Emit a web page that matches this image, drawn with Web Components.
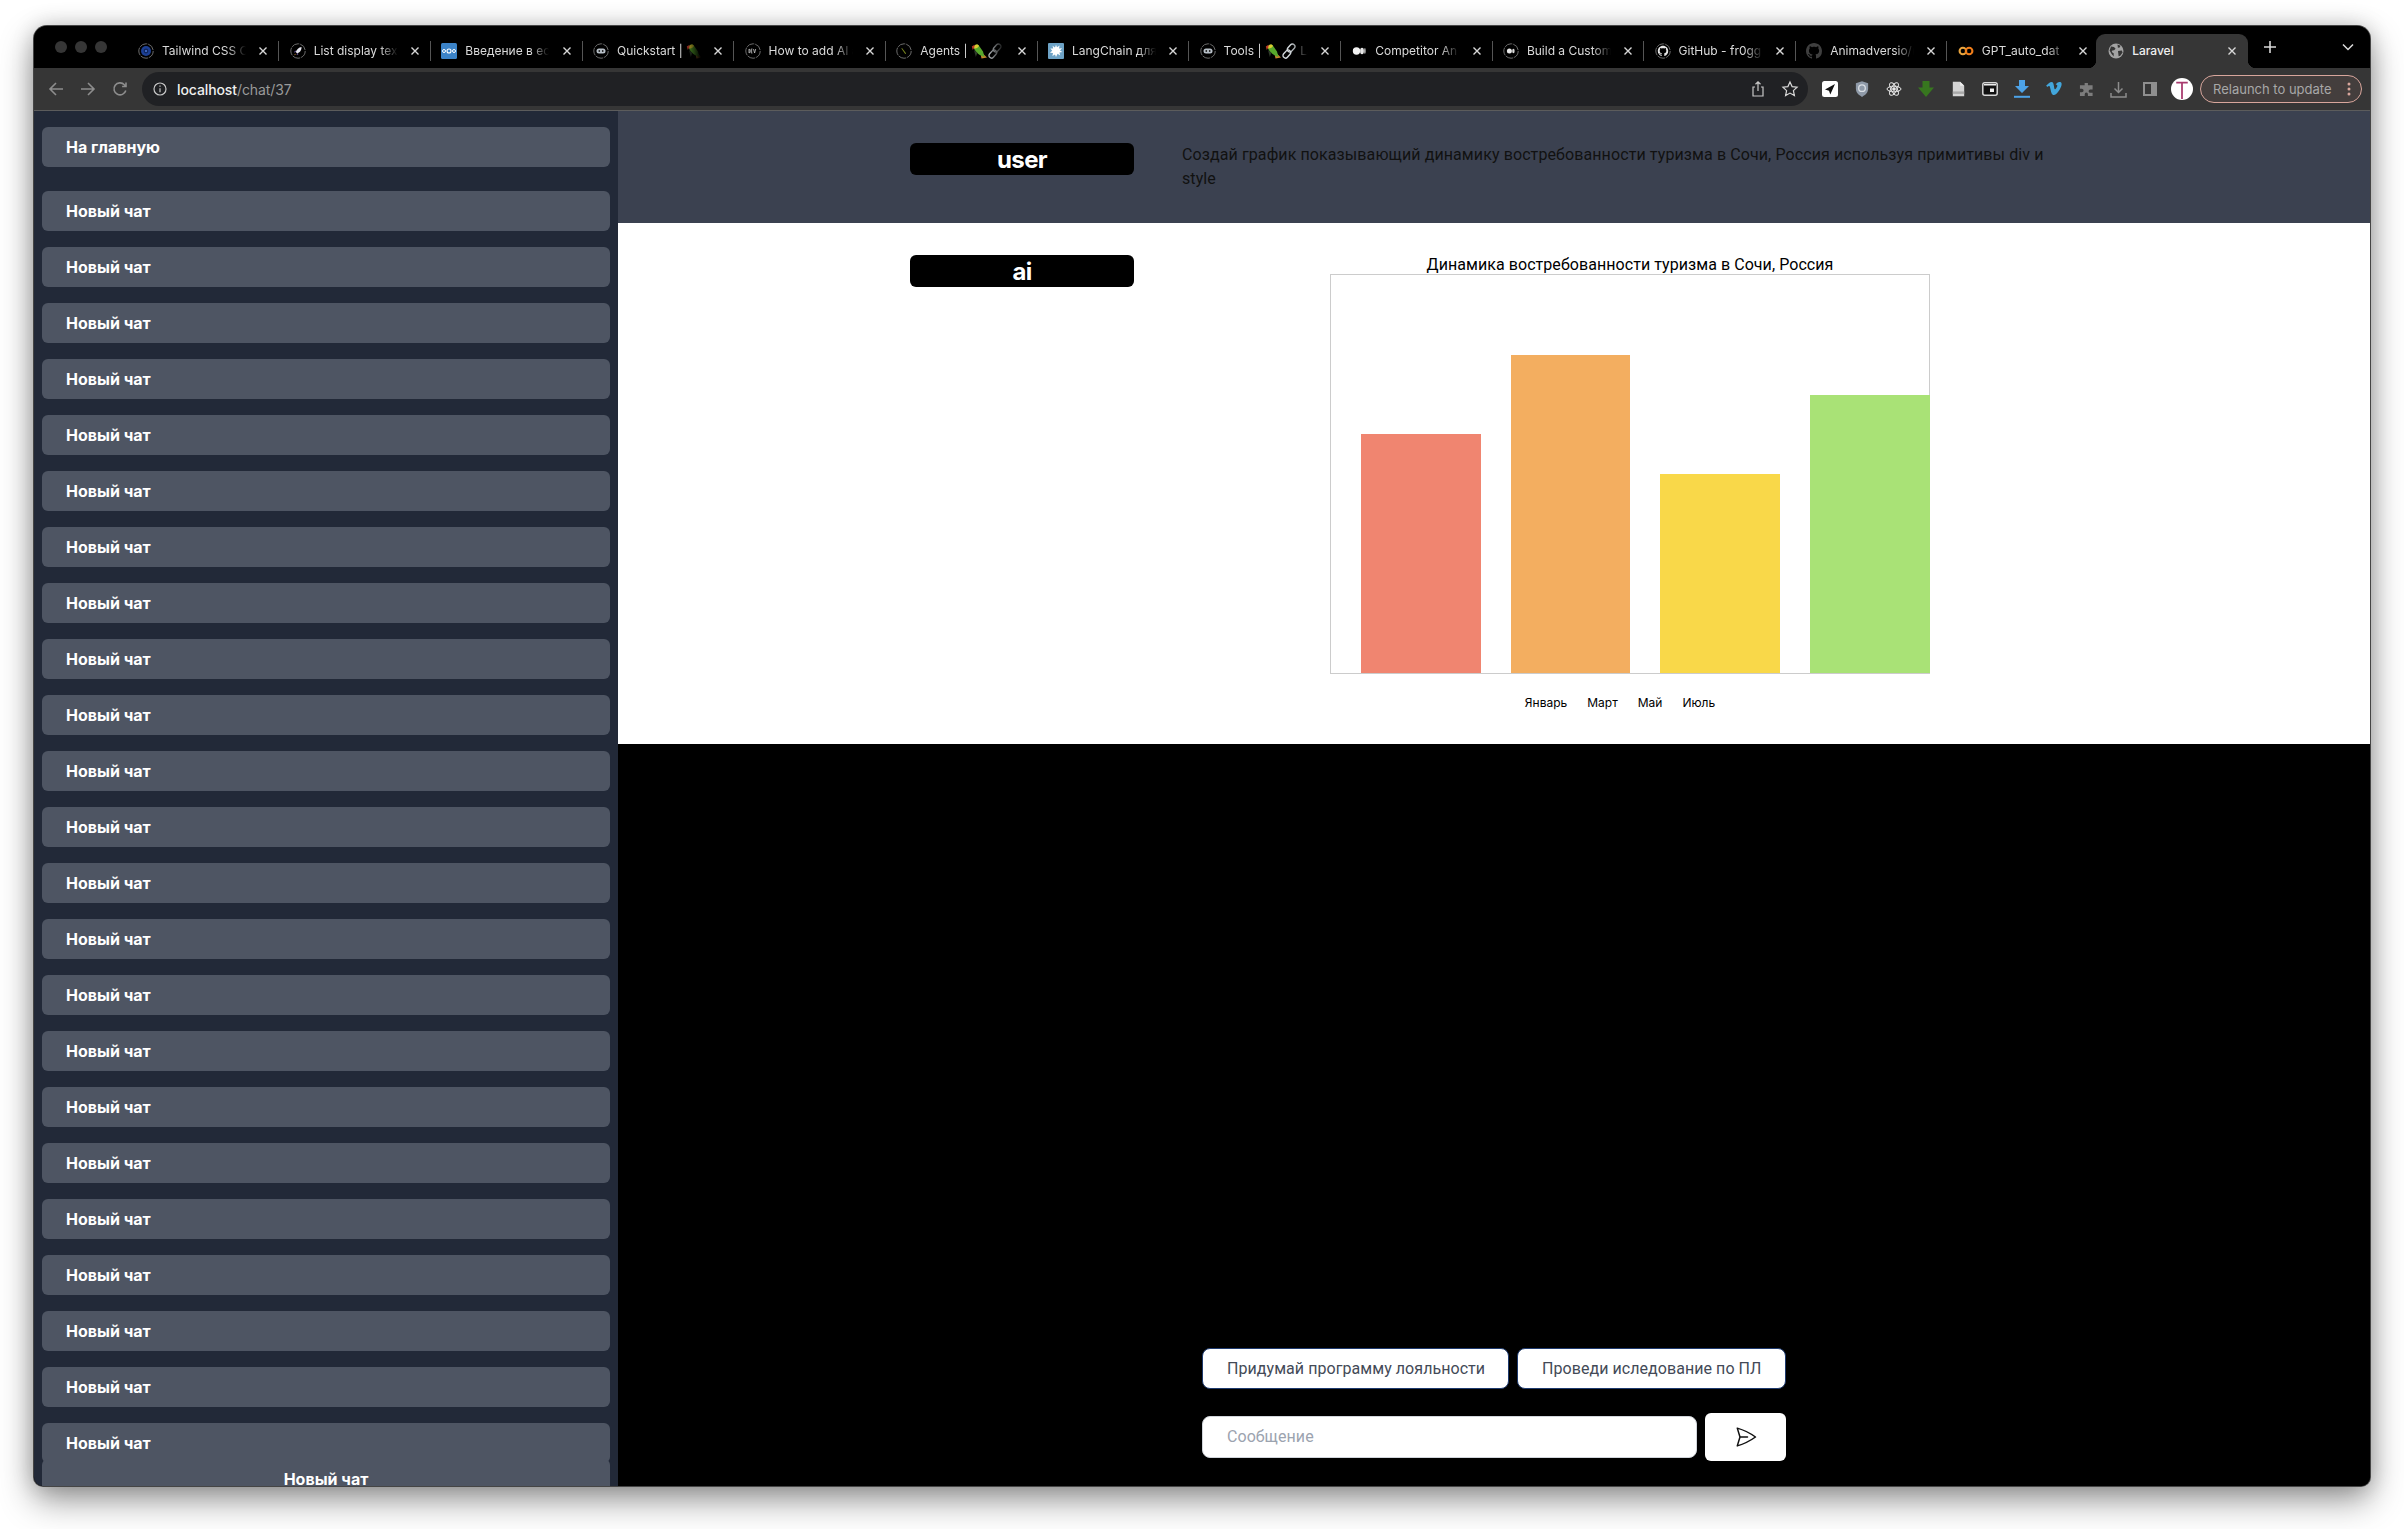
<!DOCTYPE html>
<html lang="ru">
<head>
<meta charset="utf-8">
<title>Laravel</title>
<style>
    html, body{ margin: 0; height: 100%; background: #fff; overflow: hidden; }
    body{ font-family: Inter, "Liberation Sans", sans-serif; padding: 26px 0 0 34px; box-sizing: border-box; height: 1529px; }
</style>
</head>
<body>

<app-window>
    <tab-strip slot="tabs">
        <browser-tab icon="tw">Tailwind CSS C</browser-tab>
        <browser-tab icon="rocket">List display tex</browser-tab>
        <browser-tab icon="nn">Введение в ес</browser-tab>
        <browser-tab icon="bot">Quickstart | <emoji-parrot></emoji-parrot></browser-tab>
        <browser-tab icon="dev">How to add AI a</browser-tab>
        <browser-tab icon="pen">Agents | <emoji-parrot></emoji-parrot><emoji-link></emoji-link></browser-tab>
        <browser-tab icon="splat">LangChain для</browser-tab>
        <browser-tab icon="bot">Tools | <emoji-parrot></emoji-parrot><emoji-link></emoji-link> La</browser-tab>
        <browser-tab icon="medium">Competitor An</browser-tab>
        <browser-tab icon="mring">Build a Custom</browser-tab>
        <browser-tab icon="gh">GitHub - fr0gg</browser-tab>
        <browser-tab icon="ghdark">Animadversio/(</browser-tab>
        <browser-tab icon="colab" nosep>GPT_auto_dat</browser-tab>
        <browser-tab icon="globe" active>Laravel</browser-tab>
    </tab-strip>
    <tool-bar slot="toolbar"></tool-bar>

    <chat-sidebar slot="sidebar">
        <side-button slot="home">На главную</side-button>
        <side-button>Новый чат</side-button><side-button>Новый чат</side-button><side-button>Новый чат</side-button>
        <side-button>Новый чат</side-button><side-button>Новый чат</side-button><side-button>Новый чат</side-button>
        <side-button>Новый чат</side-button><side-button>Новый чат</side-button><side-button>Новый чат</side-button>
        <side-button>Новый чат</side-button><side-button>Новый чат</side-button><side-button>Новый чат</side-button>
        <side-button>Новый чат</side-button><side-button>Новый чат</side-button><side-button>Новый чат</side-button>
        <side-button>Новый чат</side-button><side-button>Новый чат</side-button><side-button>Новый чат</side-button>
        <side-button>Новый чат</side-button><side-button>Новый чат</side-button><side-button>Новый чат</side-button>
        <side-button>Новый чат</side-button><side-button>Новый чат</side-button>
        <side-button slot="pinned" center>Новый чат</side-button>
    </chat-sidebar>

    <chat-message role-name="user" kind="user">
        Создай график показывающий динамику востребованности туризма в Сочи, Россия используя примитивы div и style
    </chat-message>
    <chat-message role-name="ai" kind="ai">
        <bar-chart></bar-chart>
    </chat-message>
    <chat-form></chat-form>
</app-window>

<script>
const OCTOCAT = "M8 0C3.58 0 0 3.58 0 8c0 3.54 2.29 6.53 5.47 7.59.4.07.55-.17.55-.38 0-.19-.01-.82-.01-1.49-2.01.37-2.53-.49-2.69-.94-.09-.23-.48-.94-.82-1.13-.28-.15-.68-.52-.01-.53.63-.01 1.08.58 1.23.82.72 1.21 1.87.87 2.33.66.07-.52.28-.87.51-1.07-1.78-.2-3.64-.89-3.64-3.95 0-.87.31-1.59.82-2.15-.08-.2-.36-1.02.08-2.12 0 0 .67-.21 2.2.82.64-.18 1.32-.27 2-.27.68 0 1.36.09 2 .27 1.53-1.04 2.2-.82 2.2-.82.44 1.1.16 1.92.08 2.12.51.56.82 1.27.82 2.15 0 3.07-1.87 3.75-3.65 3.95.29.25.54.73.54 1.48 0 1.07-.01 1.93-.01 2.2 0 .21.15.46.55.38A8.013 8.013 0 0016 8c0-4.42-3.58-8-8-8z";
const RING = `<circle cx="8" cy="8" r="7.2" fill="none" stroke="#6b6b6b" stroke-width="1" stroke-dasharray="8 1"/>`;

const FAVICONS = {
    tw: `${RING}<circle cx="8" cy="8" r="5" fill="#1c3f94"/><circle cx="8" cy="8" r="2.4" fill="#10275f"/><circle cx="8" cy="8" r="1" fill="#4d7be0"/>`,
    rocket: `${RING}<path d="M11.5 4C8.8 4.4 6.6 6.6 5.8 9l1.4 1.4c2.4-.8 4.6-3 4.3-6.4z" fill="#e8e8f0"/><path d="M5.8 9L4.2 9.6l1-2zM7.2 10.4l-.6 1.6 2-1z" fill="#9a7be0"/><path d="M5.4 10.8l-1 1 .3.4 1-.9z" fill="#f0a040"/>`,
    nn: `<rect width="16" height="16" rx="1.5" fill="#3b83c8"/><circle cx="3" cy="8" r="1.5" fill="none" stroke="#fff" stroke-width="1"/><circle cx="8" cy="8" r="2" fill="none" stroke="#fff" stroke-width="1.1"/><circle cx="13" cy="8" r="1.5" fill="none" stroke="#fff" stroke-width="1"/>`,
    bot: `${RING}<rect x="3.5" y="5.5" width="9" height="5" rx="2.5" fill="#b8c0c8"/><circle cx="6.3" cy="8" r=".9" fill="#222"/><circle cx="9.7" cy="8" r=".9" fill="#222"/>`,
    dev: `${RING}<path d="M4 6v4c1.500 0 1.500-4 0-4M7.400 6H6.200v4h1.200M6.200 8h1M8.500 6l1.100 4 1.100-4" fill="none" stroke="#c8c8c8" stroke-width=".8"/>`,
    pen: `${RING}<path d="M6 5l4.2 5.5-1 .6L5.4 5.6z" fill="#7c8a20"/>`,
    splat: `<rect width="16" height="16" rx="1" fill="#6ea3c6"/><path d="M8 1.8l1 2.4 2.6-1.6-.6 2.8 3-.2-2 2.2 2.4 1.6-3 .4.8 3-2.6-1.6L8 14l-1-2.6-2.6 1.6.6-3-3-.2 2.2-2L2.4 5.4l2.8.2-.6-2.8 2.4 1.6z" fill="#fff"/>`,
    medium: `<circle cx="5.5" cy="8" r="3.7" fill="#f2f2f2"/><ellipse cx="11" cy="8" rx="1.9" ry="3.3" fill="#e6e6e6"/><ellipse cx="13.9" cy="8" rx=".7" ry="3" fill="#d8d8d8"/>`,
    mring: `${RING}<circle cx="6.4" cy="8" r="2.5" fill="#e8e8e8"/><ellipse cx="10.4" cy="8" rx="1.2" ry="2.2" fill="#d8d8d8"/>`,
    gh: `${RING}<g transform="translate(2.8 2.8) scale(.65)"><path d="${OCTOCAT}" fill="#e6e6e6"/></g>`,
    ghdark: `<path d="${OCTOCAT}" fill="#3f3f3f"/>`,
    colab: `<circle cx="4.9" cy="8" r="3.3" fill="none" stroke="#e8a33d" stroke-width="2.1"/><circle cx="11.1" cy="8" r="3.3" fill="none" stroke="#ef7d1a" stroke-width="2.1"/>`,
    globe: `<circle cx="8" cy="8" r="7.5" fill="#a3a3a3"/><path d="M3 3.5l3 .5 1.6 1.8-1.5 1.5-1.8.1-.6 1.6 2 1.2v3.2L3.6 11 1.6 7.5zM9.5 1.6l3 1.2-.8 1.6-1.8.3zM10 8l3.8-.6.8 2-2.4 3.4-1.6.4z" fill="#363636"/>`
};

class AppWindow extends HTMLElement {
    constructor(){
        super();
        this.attachShadow({ mode: 'open' }).innerHTML = `
            <style>
                :host{
                    display: flex;
                    flex-direction: column;
                    width: 2336px;
                    height: 1460px;
                    border-radius: 13px 13px 9px 9px;
                    overflow: hidden;
                    background: #000;
                    box-shadow: 0 0 0 1px #454545, 0 14px 34px rgba(0,0,0,.42), 0 0 22px rgba(0,0,0,.18);
                }
                .main{ flex: 1; display: flex; min-height: 0; }
                .conversation{ flex: 1; display: flex; flex-direction: column; background: #000; min-width: 0; }
            </style>
            <slot name="tabs"></slot>
            <slot name="toolbar"></slot>
            <div class="main">
                <slot name="sidebar"></slot>
                <div class="conversation"><slot></slot></div>
            </div>
        `;
    }
}

class TabStrip extends HTMLElement {
    constructor(){
        super();
        this.attachShadow({ mode: 'open' }).innerHTML = `
            <style>
                :host{
                    display: flex;
                    align-items: flex-end;
                    height: 42px;
                    background: #000;
                    position: relative;
                    padding-left: 93.6px;
                    flex: none;
                }
                .lights{ position: absolute; left: 21px; top: 15px; display: flex; gap: 8px; }
                .lights i{ width: 12px; height: 12px; border-radius: 50%; background: #363636; display: block; }
                .plus{ width: 14px; height: 14px; margin: 0 0 14px 15px; flex: none; }
                .chev{ width: 12px; height: 8px; margin: 0 0 17px 65px; flex: none; }
            </style>
            <div class="lights"><i></i><i></i><i></i></div>
            <slot></slot>
            <svg class="plus" viewBox="0 0 14 14"><path d="M7 1v12M1 7h12" stroke="#d8d8d8" stroke-width="1.6"/></svg>
            <svg class="chev" viewBox="0 0 12 8"><path d="M1 1.5l5 5 5-5" fill="none" stroke="#dcdcdc" stroke-width="1.5"/></svg>
        `;
    }
}

class BrowserTab extends HTMLElement {
    connectedCallback(){
        const root = this.attachShadow({ mode: 'open' });
        root.innerHTML = `
            <style>
                :host{
                    display: flex;
                    align-items: center;
                    box-sizing: border-box;
                    width: 151.67px;
                    height: 34px;
                    flex: none;
                    position: relative;
                    padding: 0 0 0 10.4px;
                    color: #dadada;
                    font: 12px Inter, "Liberation Sans", sans-serif;
                }
                :host([active]){
                    background: #363636;
                    color: #efefef;
                    border-radius: 9px 9px 0 0;
                    width: 152px;
                    margin-left: -3px;
                    padding-left: 12px;
                }
                :host(:not([active]):not([nosep]))::after{
                    content: "";
                    position: absolute;
                    right: 0;
                    top: 7px;
                    height: 20px;
                    width: 1px;
                    background: #555;
                }
                :host([active])::before{
                    content: "";
                    position: absolute;
                    left: -8px;
                    bottom: 0;
                    width: 8px;
                    height: 8px;
                    background: radial-gradient(circle at 0 0, transparent 8px, #363636 8.5px);
                }
                .flare{
                    display: none;
                    position: absolute;
                    right: -8px;
                    bottom: 0;
                    width: 8px;
                    height: 8px;
                    background: radial-gradient(circle at 100% 0, transparent 8px, #363636 8.5px);
                }
                :host([active]) .flare{ display: block; }
                .fav{ width: 16px; height: 16px; flex: none; }
                .title{
                    width: 86px;
                    margin-left: 8px;
                    white-space: nowrap;
                    overflow: hidden;
                    flex: none;
                    line-height: 18px;
                    -webkit-mask-image: linear-gradient(90deg, #000 66px, transparent 84px);
                    mask-image: linear-gradient(90deg, #000 66px, transparent 84px);
                }
                :host([active]) .title{ -webkit-mask-image: none; mask-image: none; font-weight: 500; }
                .close{ width: 10px; height: 10px; position: absolute; right: 11px; top: 12px; }
            </style>
            <svg class="fav" viewBox="0 0 16 16">${FAVICONS[this.getAttribute('icon')] || ''}</svg>
            <span class="title"><slot></slot></span>
            <svg class="close" viewBox="0 0 10 10"><path d="M1.5 1.5l7 7M8.5 1.5l-7 7" stroke="#d8d8d8" stroke-width="1.4"/></svg>
            <i class="flare"></i>
        `;
    }
}

class EmojiParrot extends HTMLElement {
    constructor(){
        super();
        this.attachShadow({ mode: 'open' }).innerHTML = `
            <style>:host{ display: inline-block; width: 16px; height: 16px; vertical-align: -4px; } svg{ display: block; }</style>
            <svg width="16" height="16" viewBox="0 0 16 16">
                <path d="M9 8L16 14.500 10.500 15.500z" fill="#c9872e"/>
                <path d="M2.500 4.500C3.500 1 7 .5 8.500 3.500L12 8.500l1.500 5.500C9.500 13 5 10 2.500 4.500z" fill="#58a82c"/>
                <path d="M2.500 5C2.800 1.500 6.500.4 8 3 7 5 4.500 6 2.500 5z" fill="#dccb30"/>
                <path d="M3.500 1.800L.8 3.600 1.800 7l1.500-2.400z" fill="#bb3a28"/>
                <path d="M3 7l1.800 7 1.600-4.200z" fill="#2f3a2a"/>
            </svg>`;
    }
}

class EmojiLink extends HTMLElement {
    constructor(){
        super();
        this.attachShadow({ mode: 'open' }).innerHTML = `
            <style>:host{ display: inline-block; width: 16px; height: 16px; vertical-align: -4px; } svg{ display: block; }</style>
            <svg width="16" height="16" viewBox="0 0 16 16" fill="none" stroke="#d4dade" stroke-width="1.4">
                <rect x="7.6" y="0.4" width="5" height="9" rx="2.5" transform="rotate(42 10 5)"/>
                <rect x="3.4" y="6.6" width="5" height="9" rx="2.5" transform="rotate(42 6 11)"/>
            </svg>`;
    }
}

class ToolBar extends HTMLElement {
    constructor(){
        super();
        this.attachShadow({ mode: 'open' }).innerHTML = `
            <style>
                :host{
                    display: flex;
                    align-items: center;
                    box-sizing: border-box;
                    height: 43px;
                    flex: none;
                    padding: 0 0 0 12px;
                    background: #363636;
                    border-bottom: 1px solid #5c5c5c;
                    font: 14px Inter, "Liberation Sans", sans-serif;
                }
                svg{ display: block; flex: none; }
                .nav{ display: flex; gap: 12px; width: 96px; flex: none; }
                .omni{
                    display: flex;
                    align-items: center;
                    box-sizing: border-box;
                    width: 1666px;
                    height: 34px;
                    flex: none;
                    padding: 0 9px 0 11px;
                    border-radius: 17px;
                    background: #202124;
                    color: #9a9a9a;
                }
                .url{ margin-left: 10px; flex: 1; letter-spacing: -.1px; }
                .url b{ color: #efefef; font-weight: 500; }
                .omni-icons{ display: flex; gap: 14px; }
                .ext{ display: flex; margin-left: 6px; flex: none; }
                .ext span{ display: flex; align-items: center; justify-content: center; width: 32px; height: 34px; }
                .pill{
                    display: flex;
                    align-items: center;
                    justify-content: space-between;
                    box-sizing: border-box;
                    width: 162px;
                    height: 28px;
                    margin-left: 2px;
                    padding: 0 10px 0 12px;
                    flex: none;
                    border-radius: 14px;
                    border: 1px solid #d8a69c;
                    background: #443e3d;
                    color: #a8a8a8;
                    font-size: 13px;
                    white-space: nowrap;
                }
            </style>
            <div class="nav">
                <svg width="20" height="20" viewBox="0 0 20 20" fill="none" stroke="#8d8d8d" stroke-width="1.6"><path d="M17 10H4M10 4l-6 6 6 6"/></svg>
                <svg width="20" height="20" viewBox="0 0 20 20" fill="none" stroke="#8d8d8d" stroke-width="1.6"><path d="M3 10h13M10 4l6 6-6 6"/></svg>
                <svg width="20" height="20" viewBox="0 0 20 20" fill="none" stroke="#8d8d8d" stroke-width="1.6"><path d="M15.8 11.5A6 6 0 1 1 14.4 5.8L16 7.4M16 3.6v3.9h-3.9"/></svg>
            </div>
            <div class="omni">
                <svg width="14" height="14" viewBox="0 0 14 14" fill="none" stroke="#c8c8c8" stroke-width="1.2"><circle cx="7" cy="7" r="6"/><path d="M7 6.2v4M7 3.6v1.2"/></svg>
                <span class="url"><b>localhost</b>/chat/37</span>
                <div class="omni-icons">
                    <svg width="18" height="18" viewBox="0 0 18 18" fill="none" stroke="#c8c8c8" stroke-width="1.2"><path d="M6 7H4v9h10V7h-2M9 11V2M6.5 4.2L9 1.8l2.500 2.400"/></svg>
                    <svg width="18" height="18" viewBox="0 0 18 18" fill="none" stroke="#d8d8d8" stroke-width="1.2"><path d="M9 2l2.100 4.600 5 .6-3.700 3.400 1 5L9 13.100l-4.400 2.500 1-5L1.900 7.200l5-.6z"/></svg>
                </div>
            </div>
            <div class="ext">
                <span><svg width="16" height="16" viewBox="0 0 16 16"><rect width="16" height="16" rx="2.500" fill="#fff"/><path d="M13 3L3 8.500l4 1.200 1.300 3.800z" fill="#111"/></svg></span>
                <span><svg width="14" height="16" viewBox="0 0 16 18"><path d="M8 0l7 2.500v6c0 4.500-3 7.500-7 9.500-4-2-7-5-7-9.500v-6z" fill="#8f9aa8"/><circle cx="8" cy="8" r="3.800" fill="none" stroke="#d9dee4" stroke-width="1.500"/></svg></span>
                <span><svg width="16" height="16" viewBox="0 0 16 16" fill="none" stroke="#e6e6e6" stroke-width="1"><ellipse cx="8" cy="8" rx="7" ry="2.800"/><ellipse cx="8" cy="8" rx="7" ry="2.800" transform="rotate(60 8 8)"/><ellipse cx="8" cy="8" rx="7" ry="2.800" transform="rotate(120 8 8)"/><circle cx="8" cy="8" r="1.300" fill="#e6e6e6"/></svg></span>
                <span><svg width="16" height="16" viewBox="0 0 16 16"><path d="M4.500 0h7v6.500H16L8 16 0 6.500h4.500z" fill="#37761f"/></svg></span>
                <span><svg width="13" height="16" viewBox="0 0 16 18"><path d="M1 0h9l5 5v13H1z" fill="#d4d4d4"/><path d="M10 0l5 5h-5z" fill="#f0f0f0"/><rect x="1" y="12" width="14" height="3" fill="#a8a8a8"/></svg></span>
                <span><svg width="16" height="14" viewBox="0 0 16 14"><rect x=".8" y=".8" width="14.400" height="12.400" rx="2" fill="#111" stroke="#d8d8d8" stroke-width="1.500"/><rect x="2" y="2" width="12" height="1.500" fill="#eee"/><rect x="8" y="6.500" width="4" height="3.500" fill="#eee"/></svg></span>
                <span><svg width="16" height="18" viewBox="0 0 16 18"><path d="M5 0h6v6h4l-7 7-7-7h4z" fill="#4da3e8"/><rect y="15.800" width="16" height="2" fill="#4da3e8"/></svg></span>
                <span><svg width="16" height="16" viewBox="0 0 16 16"><path d="M.2 4.600C2.400 2.600 4 1 5.500 1c1.400 0 2 1.200 2.300 3.300.3 2 .6 4 1.100 4 .8 0 2.400-2.600 2.400-3.600 0-1.100-1-1-1.700-.6C10.400 1.800 12.300.8 14 1c1.500.2 1.900 1.500 1.500 3.200-.6 3-4.600 9.800-7.700 9.800-2 0-2.600-2.600-3.200-5.300C4.200 7 3.900 5 3.200 5c-.4 0-1 .4-2 1z" fill="#42a6dc"/></svg></span>
                <span><svg width="15" height="15" viewBox="0 0 16 16"><path d="M6 1h3.500v2.500h5V8H12a1.700 1.700 0 0 0 0 3.500h2.500V15h-5v-2a1.700 1.700 0 0 0-3.400 0v2H1v-4h2a1.900 1.900 0 0 0 0-3.800H1V3.500h5z" fill="#7d7d7d"/></svg></span>
                <span><svg width="17" height="17" viewBox="0 0 17 17" fill="none" stroke="#8d8d8d" stroke-width="1.500"><path d="M8.500 1v10M4.500 7.500l4 4 4-4M1 12v4h15v-4"/></svg></span>
                <span><svg width="14" height="14" viewBox="0 0 14 14"><rect x="1" y="1" width="12" height="12" fill="none" stroke="#8f8f8f" stroke-width="2"/><rect x="8" y="1" width="5" height="12" fill="#8f8f8f"/></svg></span>
                <span><svg width="22" height="22" viewBox="0 0 21 21"><circle cx="10.500" cy="10.500" r="10.500" fill="#fff"/><path d="M5 4.500h11M10.500 4.500V20" stroke="#a83a6e" stroke-width="1.700"/></svg></span>
            </div>
            <div class="pill">
                <span>Relaunch to update</span>
                <svg width="4" height="14" viewBox="0 0 4 14" fill="#d8a69c"><circle cx="2" cy="2" r="1.500"/><circle cx="2" cy="7" r="1.500"/><circle cx="2" cy="12" r="1.500"/></svg>
            </div>
        `;
    }
}

class ChatSidebar extends HTMLElement {
    constructor(){
        super();
        this.attachShadow({ mode: 'open' }).innerHTML = `
            <style>
                :host{
                    display: block;
                    box-sizing: border-box;
                    width: 584px;
                    flex: none;
                    background: #222938;
                    position: relative;
                    overflow: hidden;
                    padding: 16px 8px 0;
                }
                .home{ margin-bottom: 24px; }
                .list{ display: flex; flex-direction: column; gap: 16px; }
                /* boton fijo que queda encima de la lista */
                .pinned{ position: absolute; left: 8px; right: 8px; top: 1348px; }
            </style>
            <div class="home"><slot name="home"></slot></div>
            <div class="list"><slot></slot></div>
            <div class="pinned"><slot name="pinned"></slot></div>
        `;
    }
}

class SideButton extends HTMLElement {
    constructor(){
        super();
        this.attachShadow({ mode: 'open' }).innerHTML = `
            <style>
                :host{
                    display: flex;
                    align-items: center;
                    box-sizing: border-box;
                    height: 40px;
                    padding: 0 24px;
                    border-radius: 6px;
                    background: #4e5563;
                    color: #fff;
                    font: 700 16px/24px Inter, "Liberation Sans", sans-serif;
                }
                :host([center]){ justify-content: center; }
            </style>
            <slot></slot>
        `;
    }
}

class ChatMessage extends HTMLElement {
    constructor(){
        super();
        this.attachShadow({ mode: 'open' }).innerHTML = `
            <style>
                :host{
                    display: flex;
                    justify-content: center;
                    box-sizing: border-box;
                    padding: 32px 0;
                    flex: none;
                    background: #fff;
                    font: 16px/24px Roboto, "Liberation Sans", sans-serif;
                    letter-spacing: .1px;
                    color: #111;
                }
                :host([kind="user"]){ background: #3b4150; height: 112px; }
                :host([kind="ai"]){ height: 521px; }
                .who{
                    width: 224px;
                    height: 32px;
                    flex: none;
                    border-radius: 6px;
                    background: #000;
                    color: #fff;
                    font: 700 24px/34px Inter, "Liberation Sans", sans-serif;
                    letter-spacing: -.6px;
                    text-align: center;
                }
                .body{ width: 896px; margin-left: 48px; flex: none; }
            </style>
            <div class="who"></div>
            <div class="body"><slot></slot></div>
        `;
    }
    connectedCallback(){
        this.shadowRoot.querySelector('.who').textContent = this.getAttribute('role-name');
    }
}

class BarChart extends HTMLElement {
    constructor(){
        super();
        const bars = [[239, '#f08570'], [318, '#f3ae60'], [199, '#f9d849'], [278, '#a9e276']];
        const months = ['Январь', 'Март', 'Май', 'Июль'];
        this.attachShadow({ mode: 'open' }).innerHTML = `
            <style>
                :host{ display: block; width: 600px; margin: 0 auto; color: #000; }
                h2{ margin: 0; font: 400 16px/19px Roboto, "Liberation Sans", sans-serif; letter-spacing: .06px; text-align: center; }
                .plot{
                    display: flex;
                    align-items: flex-end;
                    box-sizing: border-box;
                    height: 400px;
                    border: 1px solid #ccc;
                }
                .plot div{ width: 119.5px; margin-left: 30px; flex: none; }
                .plot div:last-child{ width: 120.5px; }
                .labels{ display: flex; justify-content: center; margin-top: 21px; letter-spacing: 0; font: 12px/15px Inter, "Liberation Sans", sans-serif; }
                .labels span{ margin-right: 20px; }
            </style>
            <h2>Динамика востребованности туризма в Сочи, Россия</h2>
            <div class="plot">${bars.map(b => `<div style="height:${b[0]}px;background:${b[1]}"></div>`).join('')}</div>
            <div class="labels">${months.map(m => `<span>${m}</span>`).join('')}</div>
        `;
    }
}

class ChatForm extends HTMLElement {
    constructor(){
        super();
        this.attachShadow({ mode: 'open' }).innerHTML = `
            <style>
                :host{
                    display: flex;
                    flex-direction: column;
                    box-sizing: border-box;
                    width: 584px;
                    margin: auto auto 0;
                    padding-bottom: 25px;
                    font: 16px/24px Roboto, "Liberation Sans", sans-serif;
                    letter-spacing: .06px;
                }
                .hints{ display: flex; gap: 8px; margin-bottom: 24px; }
                .hint{
                    box-sizing: border-box;
                    height: 41px;
                    padding: 0 24px;
                    border: 1px solid #1e3a6e;
                    border-radius: 8px;
                    background: #fff;
                    color: #434a57;
                    font: inherit;
                    letter-spacing: inherit;
                    line-height: 39px;
                    white-space: nowrap;
                }
                .hint:first-child{ width: 307px; }
                .hint:last-child{ width: 269px; }
                .send-row{ display: flex; align-items: center; gap: 8px; }
                .input{
                    box-sizing: border-box;
                    width: 495px;
                    height: 42px;
                    padding: 0 24px;
                    border-radius: 8px;
                    background: #fff;
                    border: 1px solid #d1d5db;
                    color: #9ca3af;
                    line-height: 40px;
                }
                .send{
                    display: flex;
                    align-items: center;
                    justify-content: center;
                    box-sizing: border-box;
                    width: 81px;
                    height: 48px;
                    border: 0;
                    border-radius: 6px;
                    background: #fff;
                }
            </style>
            <div class="hints">
                <button class="hint">Придумай программу лояльности</button>
                <button class="hint">Проведи иследование по ПЛ</button>
            </div>
            <div class="send-row">
                <div class="input" role="textbox">Сообщение</div>
                <button class="send" aria-label="Отправить">
                    <svg width="24" height="24" viewBox="0 0 24 24" fill="none" stroke="#111" stroke-width="1.5" stroke-linecap="round" stroke-linejoin="round"><path d="M6 12L3.269 3.126A59.768 59.768 0 0121.485 12 59.77 59.77 0 013.27 20.876L5.999 12zm0 0h7.5"/></svg>
                </button>
            </div>
        `;
    }
}

customElements.define("app-window", AppWindow);
customElements.define("tab-strip", TabStrip);
customElements.define("browser-tab", BrowserTab);
customElements.define("emoji-parrot", EmojiParrot);
customElements.define("emoji-link", EmojiLink);
customElements.define("tool-bar", ToolBar);
customElements.define("chat-sidebar", ChatSidebar);
customElements.define("side-button", SideButton);
customElements.define("chat-message", ChatMessage);
customElements.define("bar-chart", BarChart);
customElements.define("chat-form", ChatForm);
</script>
</body>
</html>
